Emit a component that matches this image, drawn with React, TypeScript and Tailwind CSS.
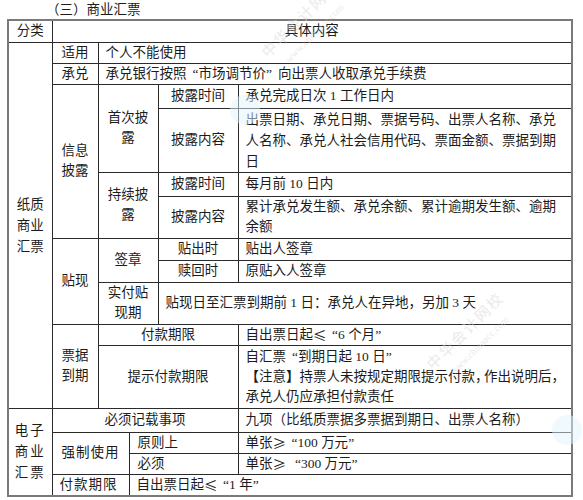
import React from "react";

const font = {
  fontFamily: '"Liberation Serif", "Noto Sans CJK SC", serif',
};

const td = "border border-[#2b2b2b] p-0 align-middle leading-[20px]";
const label = `${td} text-center`;
const body = `${td} text-left pl-[7px] pr-[2px]`;

// full-width Chinese style quotes
function L() {
  return <span className="inline-block w-[12px] text-right">“</span>;
}
function R() {
  return <span className="inline-block w-[12px] text-left">”</span>;
}
// compressed comma
function C() {
  return <span className="inline-block w-[9px] overflow-hidden align-top">，</span>;
}
// CJK width comparison sign
function Cmp({ c }: { c: string }) {
  return (
    <span className="font-['Noto_Sans_CJK_SC'] inline-block w-[13px] h-[20px] align-top text-center">{c}</span>
  );
}

function Watermark({ className }: { className: string }) {
  return (
    <div
      className={`pointer-events-none absolute flex flex-col items-center -rotate-45 text-[#d6d6d6] opacity-50 ${className}`}
    >
      <span className="text-[15px] tracking-[2px]">中华会计网校</span>
      <span className="text-[10px]">www.chinaacc.com</span>
    </div>
  );
}

export default function App() {
  const rows = [22, 21, 21, 24, 64, 24, 42, 22, 22, 42, 21, 63, 24, 21, 21, 22];
  const h = (i: number) => ({ height: rows[i] });

  return (
    <div className="relative w-[583px] h-[500px] bg-white text-[#1c1c1c] text-[13.5px] overflow-hidden" style={font}>
      <div className="h-[19px] pl-[46px] leading-[19px]">（三）商业汇票</div>
      <table className="ml-[7px] w-[566px] table-fixed border-collapse border-2 border-[#7a7a7a]">
        <colgroup>
          <col className="w-[44px]" />
          <col className="w-[46px]" />
          <col className="w-[31px]" />
          <col className="w-[29px]" />
          <col className="w-[80px]" />
          <col />
        </colgroup>
        <tbody>
          <tr style={h(0)}>
            <td className={label}>分类</td>
            <td className={label} colSpan={5}>具体内容</td>
          </tr>
          <tr style={h(1)}>
            <td className={`${label} px-[6px] leading-[21px]`} rowSpan={11}>纸质商业汇票</td>
            <td className={label}>适用</td>
            <td className={body} colSpan={4}>个人不能使用</td>
          </tr>
          <tr style={h(2)}>
            <td className={label}>承兑</td>
            <td className={body} colSpan={4}>
              承兑银行按照<L />市场调节价<R />向出票人收取承兑手续费
            </td>
          </tr>
          <tr style={h(3)}>
            <td className={`${label} px-[8px]`} rowSpan={4}>信息披露</td>
            <td className={`${label} px-[8px]`} colSpan={2} rowSpan={2}>首次披露</td>
            <td className={label}>披露时间</td>
            <td className={body}>承兑完成日次 1 工作日内</td>
          </tr>
          <tr style={h(4)}>
            <td className={label}>披露内容</td>
            <td className={`${body} leading-[21px]`}>出票日期、承兑日期、票据号码、出票人名称、承兑人名称、承兑人社会信用代码、票面金额、票据到期日</td>
          </tr>
          <tr style={h(5)}>
            <td className={`${label} px-[8px]`} colSpan={2} rowSpan={2}>持续披露</td>
            <td className={label}>披露时间</td>
            <td className={body}>每月前 10 日内</td>
          </tr>
          <tr style={h(6)}>
            <td className={label}>披露内容</td>
            <td className={body}>累计承兑发生额、承兑余额、累计逾期发生额、逾期余额</td>
          </tr>
          <tr style={h(7)}>
            <td className={label} rowSpan={3}>贴现</td>
            <td className={label} colSpan={2} rowSpan={2}>签章</td>
            <td className={label}>贴出时</td>
            <td className={body}>贴出人签章</td>
          </tr>
          <tr style={h(8)}>
            <td className={label}>赎回时</td>
            <td className={body}>原贴入人签章</td>
          </tr>
          <tr style={h(9)}>
            <td className={`${label} px-[8px]`} colSpan={2}>实付贴现期</td>
            <td className={body} colSpan={2}>贴现日至汇票到期前 1 日：承兑人在异地，另加 3 天</td>
          </tr>
          <tr style={h(10)}>
            <td className={`${label} px-[8px]`} rowSpan={2}>票据到期</td>
            <td className={label} colSpan={3}>付款期限</td>
            <td className={body}>
              自出票日起<Cmp c="≤" /><L />6 个月<R />
            </td>
          </tr>
          <tr style={h(11)}>
            <td className={label} colSpan={3}>提示付款期限</td>
            <td className={`${body} pr-0`}>
              <div>
                自汇票<L />到期日起 10 日<R />
              </div>
              <div className="whitespace-nowrap">
                <span className="font-bold">【</span>注意<span className="font-bold">】</span>持票人未按规定期限提示付款<C />作出说明后<C />
              </div>
              <div>承兑人仍应承担付款责任</div>
            </td>
          </tr>
          <tr style={h(12)}>
            <td className={`${label} px-[3px] tracking-[2px] leading-[21px]`} rowSpan={4}>电子商业汇票</td>
            <td className={label} colSpan={4}>必须记载事项</td>
            <td className={body}>九项（比纸质票据多票据到期日、出票人名称）</td>
          </tr>
          <tr style={h(13)}>
            <td className={`${label} tracking-[1px]`} colSpan={2} rowSpan={2}>强制使用</td>
            <td className={`${body} pl-[8px]`} colSpan={2}>原则上</td>
            <td className={body}>
              单张<Cmp c="≥" /><L />100 万元<R />
            </td>
          </tr>
          <tr style={h(14)}>
            <td className={`${body} pl-[8px]`} colSpan={2}>必须</td>
            <td className={body}>
              单张<Cmp c="≥" /> <L />300 万元<R />
            </td>
          </tr>
          <tr style={h(15)}>
            <td className={`${body} tracking-[1px]`} colSpan={2}>付款期限</td>
            <td className={body} colSpan={3}>
              自出票日起<Cmp c="≤" /><L />1 年<R />
            </td>
          </tr>
        </tbody>
      </table>
      <Watermark className="left-[255px] top-[6px]" />
      <Watermark className="left-[420px] top-[318px]" />
      <div className="pointer-events-none absolute left-[230px] top-[95px] h-[30px] w-[30px] rounded-full bg-[#e2f4fc] opacity-50" />
      <div className="pointer-events-none absolute left-[552px] top-[415px] h-[30px] w-[30px] rounded-full bg-[#e2f4fc] opacity-50" />
    </div>
  );
}
